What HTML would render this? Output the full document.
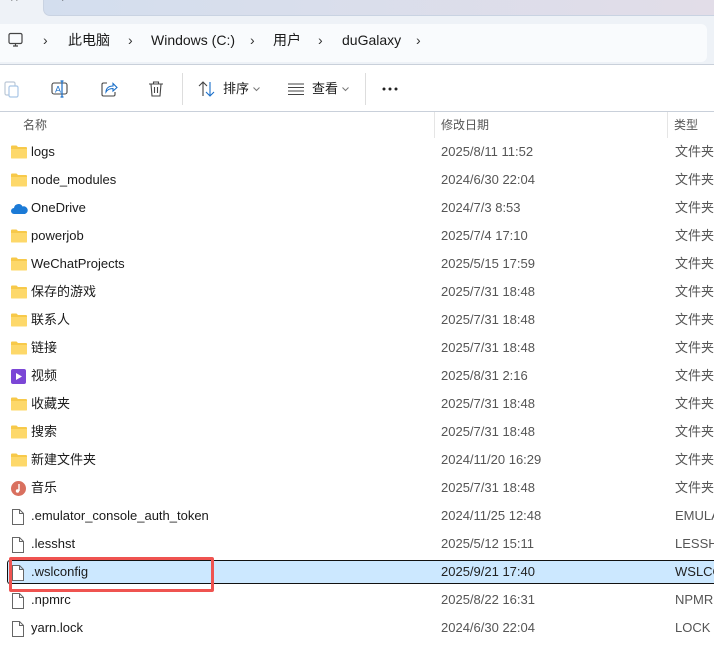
<!DOCTYPE html>
<html><head><meta charset="utf-8"><style>
*{margin:0;padding:0;box-sizing:border-box}
body{width:714px;height:649px;overflow:hidden;background:#fff;font-family:"Liberation Sans","Noto Sans CJK SC",sans-serif;font-size:13px;color:#1a1a1a;position:relative}
.abs{position:absolute;line-height:20px;white-space:nowrap}
.top{left:0;top:0;width:714px;height:65px;background:#eef2f7}
.tab{left:43px;top:-6px;width:680px;height:22px;background:linear-gradient(90deg,#d3deee,#e2dde8);border-radius:0 0 0 7px;border:1px solid #c9d3e2}
.bc{left:0;top:24px;width:707px;height:38px;background:#f9fbfd;border-radius:0 6px 6px 0}
.line{left:0;width:714px;height:1px;background:#c9d0da}
.bt{top:30px;font-size:14px;color:#1a1a1a}
.chev{top:30px;font-size:14px;color:#333}
.row{position:absolute;left:0;width:714px;height:28px}
.row span{position:absolute;top:0;line-height:28px;white-space:nowrap}
.row .n{left:31px;font-size:13px}
.row .d{left:441px;color:#555}
.row .t{left:675px;color:#555}
.ic{position:absolute;left:11px;top:7px}
</style></head><body>
<div class="abs top"></div>
<div class="abs tab"></div>
<div class="abs" style="left:11px;top:-10px;font-size:14px;color:#333">^</div>
<div class="abs" style="left:58px;top:-12px;font-size:16px;color:#333">+</div>
<div class="abs bc"></div>
<svg class="abs" style="left:8px;top:32px" width="16" height="16" viewBox="0 0 16 16"><rect x="1" y="1.5" width="13" height="10" rx="1.5" fill="none" stroke="#444" stroke-width="1.2"/><path d="M5 14h5M7.5 11.5v2.5" stroke="#444" stroke-width="1.2"/></svg>
<div class="abs chev" style="left:43px">&#x203A;</div>
<div class="abs bt" style="left:68px">此电脑</div>
<div class="abs chev" style="left:128px">&#x203A;</div>
<div class="abs bt" style="left:151px">Windows (C:)</div>
<div class="abs chev" style="left:250px">&#x203A;</div>
<div class="abs bt" style="left:273px">用户</div>
<div class="abs chev" style="left:318px">&#x203A;</div>
<div class="abs bt" style="left:342px">duGalaxy</div>
<div class="abs chev" style="left:416px">&#x203A;</div>
<div class="abs line" style="top:64px"></div>
<svg class="abs" style="left:4px;top:80px" width="16" height="18" viewBox="0 0 16 18"><rect x="1" y="2" width="10" height="13" rx="1.5" fill="none" stroke="#bcc8d6" stroke-width="1.2"/><rect x="5" y="6" width="9" height="11" rx="1.5" fill="#fff" stroke="#a9c6e6" stroke-width="1.2"/></svg>
<svg class="abs" style="left:51px;top:80px" width="18" height="18" viewBox="0 0 18 18"><rect x="1" y="3" width="15" height="11" rx="2" fill="none" stroke="#444" stroke-width="1.1"/><text x="4" y="12.5" font-size="9" fill="#1a6fc9" font-family="Liberation Sans">A</text><path d="M11 1v16M9.5 1h3M9.5 17h3" stroke="#1a6fc9" stroke-width="1.2"/></svg>
<svg class="abs" style="left:100px;top:80px" width="18" height="18" viewBox="0 0 18 18"><path d="M7 3H3.5A1.5 1.5 0 0 0 2 4.5v10A1.5 1.5 0 0 0 3.5 16h10a1.5 1.5 0 0 0 1.5-1.5V12" fill="none" stroke="#444" stroke-width="1.1"/><path d="M6 12c0-4 3-6 7-6V3.5L17 7.5 13 11V8.5C10 8.5 7.5 9.5 6 12z" fill="none" stroke="#1a6fc9" stroke-width="1.1"/></svg>
<svg class="abs" style="left:148px;top:80px" width="16" height="18" viewBox="0 0 16 18"><path d="M1 4h14M5.5 4V2h5v2M3 4l1 12h8l1-12M6.5 7v6M9.5 7v6" fill="none" stroke="#444" stroke-width="1.1"/></svg>
<div class="abs" style="left:182px;top:73px;width:1px;height:32px;background:#ddd"></div>
<svg class="abs" style="left:198px;top:81px" width="18" height="16" viewBox="0 0 18 16"><path d="M12 1v14M8 11l4 4 4-4" fill="none" stroke="#1a6fc9" stroke-width="1.1"/><path d="M5 15V1M1 5l4-4 4 4" fill="none" stroke="#444" stroke-width="1.1"/></svg>
<div class="abs" style="left:223px;top:79px;font-size:13px">排序</div>
<svg class="abs" style="left:253px;top:87px" width="7" height="5"><path d="M.5.5l3 3 3-3" fill="none" stroke="#777"/></svg>
<svg class="abs" style="left:288px;top:83px" width="16" height="12"><path d="M0 1h16M0 4.5h16M0 8h16M0 11.5h16" stroke="#444" stroke-width="1"/></svg>
<div class="abs" style="left:312px;top:79px;font-size:13px">查看</div>
<svg class="abs" style="left:342px;top:87px" width="7" height="5"><path d="M.5.5l3 3 3-3" fill="none" stroke="#777"/></svg>
<div class="abs" style="left:365px;top:73px;width:1px;height:32px;background:#ddd"></div>
<svg class="abs" style="left:382px;top:87px" width="18" height="4"><circle cx="2" cy="2" r="1.5" fill="#222"/><circle cx="8" cy="2" r="1.5" fill="#222"/><circle cx="14" cy="2" r="1.5" fill="#222"/></svg>
<div class="abs line" style="top:111px"></div>
<div class="abs" style="left:23px;top:115px;color:#555;font-size:12px">名称</div>
<div class="abs" style="left:434px;top:112px;width:1px;height:26px;background:#e5e5e5"></div>
<div class="abs" style="left:441px;top:115px;color:#555;font-size:12px">修改日期</div>
<div class="abs" style="left:667px;top:112px;width:1px;height:26px;background:#e5e5e5"></div>
<div class="abs" style="left:674px;top:115px;color:#555;font-size:12px">类型</div>
<div id="rows"></div>
<div class="abs" style="left:7px;top:560px;width:720px;height:24px;background:#cce8ff;border:1px solid #111;border-right:none;border-radius:3px 0 0 3px"></div>
<div class="abs" style="left:9px;top:557px;width:205px;height:35px;border:3px solid #ef5350;border-radius:2px"></div>
<div class="row" style="top:558px;z-index:2"><svg class="ic" width="14" height="16" viewBox="0 0 14 16"><path d="M1.5 .5h7l4 4v11h-11z M8.5.5v4h4" fill="#fff" stroke="#666"/></svg><span class="n">.wslconfig</span><span class="d" style="color:#222">2025/9/21 17:40</span><span class="t" style="color:#222">WSLCO</span></div>
<script>
var F='<svg class="ic" width="16" height="14" viewBox="0 0 16 14"><path d="M0 1.5A1 1 0 0 1 1 .5h4.5l1.5 1.5h8a1 1 0 0 1 1 1v9.5a1 1 0 0 1-1 1H1a1 1 0 0 1-1-1z" fill="#f7c94a"/><path d="M0 4h16v8.5a1 1 0 0 1-1 1H1a1 1 0 0 1-1-1z" fill="#fdd86a"/></svg>';
var D='<svg class="ic" width="14" height="16" viewBox="0 0 14 16"><path d="M1.5 .5h7l4 4v11h-11z M8.5.5v4h4" fill="#fff" stroke="#666"/></svg>';
var O='<svg class="ic" width="17" height="12" viewBox="0 0 17 12" style="top:9px"><path d="M3 11a3 3 0 0 1 0-6 4.5 4.5 0 0 1 8.5-1.5A3.5 3.5 0 0 1 14 11z" fill="#1b7ad6"/></svg>';
var V='<svg class="ic" width="15" height="15"><rect width="15" height="15" rx="2" fill="#7b46d6"/><path d="M5 4l6 3.5-6 3.5z" fill="#fff"/></svg>';
var M='<svg class="ic" width="15" height="15"><circle cx="7.5" cy="7.5" r="7.5" fill="#d9705f"/><path d="M8 3v7" stroke="#fff" stroke-width="1.4"/><circle cx="6.5" cy="10" r="1.7" fill="#fff"/></svg>';
var r=[[F,'logs','2025/8/11 11:52','文件夹'],[F,'node_modules','2024/6/30 22:04','文件夹'],[O,'OneDrive','2024/7/3 8:53','文件夹'],[F,'powerjob','2025/7/4 17:10','文件夹'],[F,'WeChatProjects','2025/5/15 17:59','文件夹'],[F,'保存的游戏','2025/7/31 18:48','文件夹'],[F,'联系人','2025/7/31 18:48','文件夹'],[F,'链接','2025/7/31 18:48','文件夹'],[V,'视频','2025/8/31 2:16','文件夹'],[F,'收藏夹','2025/7/31 18:48','文件夹'],[F,'搜索','2025/7/31 18:48','文件夹'],[F,'新建文件夹','2024/11/20 16:29','文件夹'],[M,'音乐','2025/7/31 18:48','文件夹'],[D,'.emulator_console_auth_token','2024/11/25 12:48','EMULA'],[D,'.lesshst','2025/5/12 15:11','LESSHS'],null,[D,'.npmrc','2025/8/22 16:31','NPMR'],[D,'yarn.lock','2024/6/30 22:04','LOCK 文']];
var h='';r.forEach(function(x,i){if(!x)return;h+='<div class="row" style="top:'+(138+28*i)+'px">'+x[0]+'<span class="n">'+x[1]+'</span><span class="d">'+x[2]+'</span><span class="t">'+x[3]+'</span></div>';});
document.getElementById('rows').innerHTML=h;
</script>
</body></html>
